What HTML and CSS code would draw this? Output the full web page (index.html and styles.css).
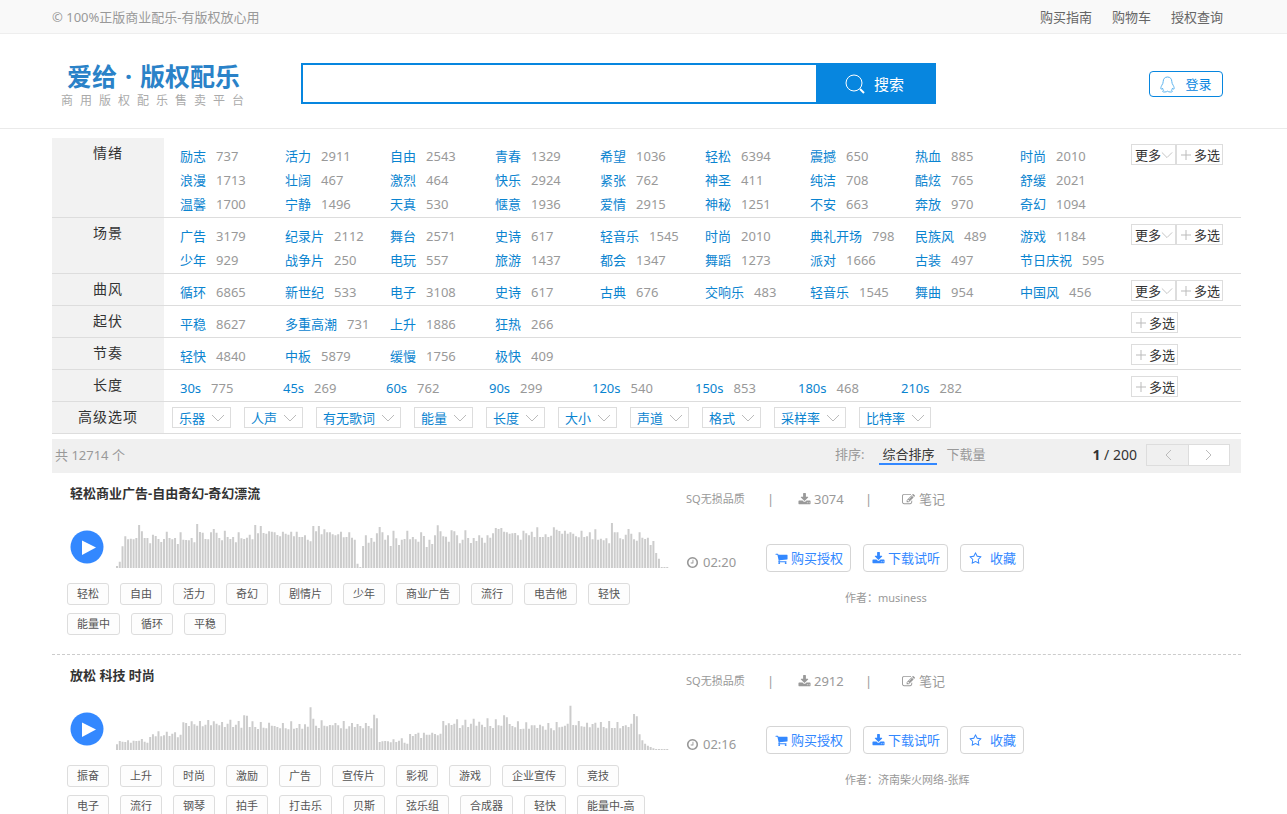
FILE: index.html
```html
<!DOCTYPE html>
<html lang="zh-CN">
<head>
    <title>爱给·版权配乐</title>
    <meta charset="utf-8">
    <meta name="viewport" content="width=device-width, initial-scale=1.0">
    <link rel="stylesheet" href="styles.css">
</head>
<body>

    <!--图标-->
    <svg class="sprite" aria-hidden="true">
        <symbol id="i-cart" viewBox="0 0 1792 1792"><path d="M704 1536q0 52-38 90t-90 38-90-38-38-90 38-90 90-38 90 38 38 90zm896 0q0 52-38 90t-90 38-90-38-38-90 38-90 90-38 90 38 38 90zm128-1088v512q0 24-16.500 42.500t-40.500 21.500l-1044 122q13 60 13 70 0 16-24 64h920q26 0 45 19t19 45-19 45-45 19h-1024q-26 0-45-19t-19-45q0-11 8-31.500t16-36 21.500-40 15.500-29.500l-177-823h-204q-26 0-45-19t-19-45 19-45 45-19h256q16 0 28.500 6.500t19.500 15.500 13 24.500 8 26 5.500 29.500 4.500 26h1201q26 0 45 19t19 45z"/></symbol>
        <symbol id="i-download" viewBox="0 0 1792 1792"><path d="M1344 1344q0-26-19-45t-45-19-45 19-19 45 19 45 45 19 45-19 19-45zm256 0q0-26-19-45t-45-19-45 19-19 45 19 45 45 19 45-19 19-45zm128-224v320q0 40-28 68t-68 28h-1472q-40 0-68-28t-28-68v-320q0-40 28-68t68-28h465l135 136q58 56 136 56t136-56l136-136h464q40 0 68 28t28 68zm-325-569q17 41-14 70l-448 448q-18 19-45 19t-45-19l-448-448q-31-29-14-70 17-39 59-39h256v-448q0-26 19-45t45-19h256q26 0 45 19t19 45v448h256q42 0 59 39z"/></symbol>
        <symbol id="i-clock" viewBox="0 0 1792 1792"><path d="M1024 544v448q0 14-9 23t-23 9h-320q-14 0-23-9t-9-23v-64q0-14 9-23t23-9h224v-352q0-14 9-23t23-9h64q14 0 23 9t9 23zm416 352q0-148-73-273t-198-198-273-73-273 73-198 198-73 273 73 273 198 198 273 73 273-73 198-198 73-273zm224 0q0 209-103 385.500t-279.500 279.500-385.500 103-385.500-103-279.500-279.500-103-385.500 103-385.500 279.500-279.500 385.500-103 385.500 103 279.500 279.500 103 385.500z"/></symbol>
        <symbol id="i-star" viewBox="0 0 1792 1792"><path d="M1201 1004l306-297-422-62-189-382-189 382-422 62 306 297-73 421 378-199 377 199zm527-357q0 22-26 48l-363 354 86 500q1 7 1 20 0 50-41 50-19 0-40-12l-449-236-449 236q-22 12-40 12-21 0-31.500-14.500t-10.500-35.500q0-6 2-20l86-500-364-354q-25-27-25-48 0-37 56-46l502-73 225-455q19-41 49-41t49 41l225 455 502 73q56 9 56 46z"/></symbol>
        <symbol id="i-edit" viewBox="0 0 1792 1792"><path d="M888 1184l116-116-152-152-116 116v56h96v96h56zm440-720q-16-16-33 1l-350 350q-17 17-1 33t33-1l350-350q17-17 1-33zm80 594v190q0 119-84.500 203.500t-203.500 84.500h-832q-119 0-203.500-84.500t-84.500-203.500v-832q0-119 84.500-203.500t203.500-84.500h832q63 0 117 25 15 7 18 23 3 17-9 29l-49 49q-14 14-32 8-23-6-45-6h-832q-66 0-113 47t-47 113v832q0 66 47 113t113 47h832q66 0 113-47t47-113v-126q0-13 9-22l64-64q15-15 35-7t20 29zm-96-738l288 288-672 672h-288v-288zm444 132l-92 92-288-288 92-92q28-28 68-28t68 28l152 152q28 28 28 68t-28 68z"/></symbol>
        <symbol id="i-down" viewBox="0 0 14 14"><path d="M1 4l6 6 6-6" fill="none" stroke="currentColor"/></symbol>
        <symbol id="i-plus" viewBox="0 0 12 12"><path d="M6 1v10M1 6h10" fill="none" stroke="currentColor"/></symbol>
        <symbol id="i-play" viewBox="0 0 34 34"><circle cx="17" cy="17" r="16.500" fill="#38f"/><path d="M12 10.500l14 7-14 7.500z" fill="#fff"/></symbol>
    </svg>

    <div class="topbar">
        <div class="wrap">
            <span>© 100%正版商业配乐-有版权放心用</span>
            <nav>
                <a href="#">购买指南</a>
                <a href="#">购物车</a>
                <a href="#">授权查询</a>
            </nav>
        </div>
    </div>

    <div class="header">
        <div class="wrap">
            <a class="logo" href="#">
                <span class="name">爱给<i>·</i>版权配乐</span>
                <span class="slogan">商用版权配乐售卖平台</span>
            </a>
            <form class="search">
                <input type="text" aria-label="搜索">
                <button type="submit">
                    <svg class="line" width="20" height="20" viewBox="0 0 20 20"><circle cx="9" cy="9" r="8"/><path d="M15 15l4 4" stroke-width="2"/></svg>
                    搜索
                </button>
            </form>
            <button class="login" type="button">
                <svg class="line" width="15" height="17" viewBox="0 0 15 17"><path d="M7.500 1C4.700 1 3.200 3 3.200 5.500c0 1.700-.6 2.400-1.400 3.800-.9 1.600-1.200 3-.8 3.800.4.400 1.100-.4 1.500-1 .1.900.5 1.600 1.100 2.200-.8.300-1.100.8-.9 1.300.5.700 3.700.5 4.800-.4 1.100.9 4.300 1.100 4.800.4.200-.5-.1-1-.9-1.300.6-.6 1-1.300 1.100-2.200.4.600 1.100 1.400 1.500 1 .4-.8.100-2.200-.8-3.800-.8-1.400-1.400-2.100-1.400-3.800C11.800 3 10.300 1 7.500 1z"/></svg>
                登录
            </button>
        </div>
    </div>

    <div class="wrap main">
        <div class="filter">
            <div class="row">
                <h3>情绪</h3>
                <ul>
                    <li><a href="#">励志</a>737</li>
                    <li><a href="#">活力</a>2911</li>
                    <li><a href="#">自由</a>2543</li>
                    <li><a href="#">青春</a>1329</li>
                    <li><a href="#">希望</a>1036</li>
                    <li><a href="#">轻松</a>6394</li>
                    <li><a href="#">震撼</a>650</li>
                    <li><a href="#">热血</a>885</li>
                    <li><a href="#">时尚</a>2010</li>
                    <li><a href="#">浪漫</a>1713</li>
                    <li><a href="#">壮阔</a>467</li>
                    <li><a href="#">激烈</a>464</li>
                    <li><a href="#">快乐</a>2924</li>
                    <li><a href="#">紧张</a>762</li>
                    <li><a href="#">神圣</a>411</li>
                    <li><a href="#">纯洁</a>708</li>
                    <li><a href="#">酷炫</a>765</li>
                    <li><a href="#">舒缓</a>2021</li>
                    <li><a href="#">温馨</a>1700</li>
                    <li><a href="#">宁静</a>1496</li>
                    <li><a href="#">天真</a>530</li>
                    <li><a href="#">惬意</a>1936</li>
                    <li><a href="#">爱情</a>2915</li>
                    <li><a href="#">神秘</a>1251</li>
                    <li><a href="#">不安</a>663</li>
                    <li><a href="#">奔放</a>970</li>
                    <li><a href="#">奇幻</a>1094</li>
                </ul>
                <div class="ops">
                    <button type="button">更多<svg><use href="#i-down"/></svg></button>
                    <button type="button"><svg class="plus"><use href="#i-plus"/></svg>多选</button>
                </div>
            </div>
            <div class="row">
                <h3>场景</h3>
                <ul>
                    <li><a href="#">广告</a>3179</li>
                    <li><a href="#">纪录片</a>2112</li>
                    <li><a href="#">舞台</a>2571</li>
                    <li><a href="#">史诗</a>617</li>
                    <li><a href="#">轻音乐</a>1545</li>
                    <li><a href="#">时尚</a>2010</li>
                    <li><a href="#">典礼开场</a>798</li>
                    <li><a href="#">民族风</a>489</li>
                    <li><a href="#">游戏</a>1184</li>
                    <li><a href="#">少年</a>929</li>
                    <li><a href="#">战争片</a>250</li>
                    <li><a href="#">电玩</a>557</li>
                    <li><a href="#">旅游</a>1437</li>
                    <li><a href="#">都会</a>1347</li>
                    <li><a href="#">舞蹈</a>1273</li>
                    <li><a href="#">派对</a>1666</li>
                    <li><a href="#">古装</a>497</li>
                    <li><a href="#">节日庆祝</a>595</li>
                </ul>
                <div class="ops">
                    <button type="button">更多<svg><use href="#i-down"/></svg></button>
                    <button type="button"><svg class="plus"><use href="#i-plus"/></svg>多选</button>
                </div>
            </div>
            <div class="row">
                <h3>曲风</h3>
                <ul>
                    <li><a href="#">循环</a>6865</li>
                    <li><a href="#">新世纪</a>533</li>
                    <li><a href="#">电子</a>3108</li>
                    <li><a href="#">史诗</a>617</li>
                    <li><a href="#">古典</a>676</li>
                    <li><a href="#">交响乐</a>483</li>
                    <li><a href="#">轻音乐</a>1545</li>
                    <li><a href="#">舞曲</a>954</li>
                    <li><a href="#">中国风</a>456</li>
                </ul>
                <div class="ops">
                    <button type="button">更多<svg><use href="#i-down"/></svg></button>
                    <button type="button"><svg class="plus"><use href="#i-plus"/></svg>多选</button>
                </div>
            </div>
            <div class="row">
                <h3>起伏</h3>
                <ul>
                    <li><a href="#">平稳</a>8627</li>
                    <li><a href="#">多重高潮</a>731</li>
                    <li><a href="#">上升</a>1886</li>
                    <li><a href="#">狂热</a>266</li>
                </ul>
                <div class="ops">
                    <button type="button"><svg class="plus"><use href="#i-plus"/></svg>多选</button>
                </div>
            </div>
            <div class="row">
                <h3>节奏</h3>
                <ul>
                    <li><a href="#">轻快</a>4840</li>
                    <li><a href="#">中板</a>5879</li>
                    <li><a href="#">缓慢</a>1756</li>
                    <li><a href="#">极快</a>409</li>
                </ul>
                <div class="ops">
                    <button type="button"><svg class="plus"><use href="#i-plus"/></svg>多选</button>
                </div>
            </div>
            <div class="row">
                <h3>长度</h3>
                <ul class="length">
                    <li><a href="#">30s</a>775</li>
                    <li><a href="#">45s</a>269</li>
                    <li><a href="#">60s</a>762</li>
                    <li><a href="#">90s</a>299</li>
                    <li><a href="#">120s</a>540</li>
                    <li><a href="#">150s</a>853</li>
                    <li><a href="#">180s</a>468</li>
                    <li><a href="#">210s</a>282</li>
                </ul>
                <div class="ops">
                    <button type="button"><svg class="plus"><use href="#i-plus"/></svg>多选</button>
                </div>
            </div>
            <div class="row">
                <h3>高级选项</h3>
                <div class="adv">
                    <select aria-label="乐器"><option>乐器</option></select>
                    <select aria-label="人声"><option>人声</option></select>
                    <select aria-label="有无歌词"><option>有无歌词</option></select>
                    <select aria-label="能量"><option>能量</option></select>
                    <select aria-label="长度"><option>长度</option></select>
                    <select aria-label="大小"><option>大小</option></select>
                    <select aria-label="声道"><option>声道</option></select>
                    <select aria-label="格式"><option>格式</option></select>
                    <select aria-label="采样率"><option>采样率</option></select>
                    <select aria-label="比特率"><option>比特率</option></select>
                </div>
            </div>
        </div>

        <div class="listbar">
            <span class="total">共 12714 个</span>
            <div class="sort">
                <span>排序:</span>
                <a class="on" href="#">综合排序</a>
                <a href="#">下载量</a>
            </div>
            <div class="pager">
                <span><b>1</b> / 200</span>
                <button type="button" aria-label="上一页" disabled><svg viewBox="0 0 8 12"><path d="M7 1L2 6l5 5"/></svg></button>
                <button type="button" aria-label="下一页"><svg viewBox="0 0 8 12"><path d="M1 1l5 5-5 5"/></svg></button>
            </div>
        </div>

        <div class="track">
            <div class="sound">
                <h2>轻松商业广告-自由奇幻-奇幻漂流</h2>
                <div class="player">
                    <button type="button" aria-label="播放"><svg><use href="#i-play"/></svg></button>
                    <svg class="wave" id="wave1" viewBox="0 0 1660 138" preserveAspectRatio="none"></svg>
                </div>
                <div class="tags">
                    <a href="#">轻松</a>
                    <a href="#">自由</a>
                    <a href="#">活力</a>
                    <a href="#">奇幻</a>
                    <a href="#">剧情片</a>
                    <a href="#">少年</a>
                    <a href="#">商业广告</a>
                    <a href="#">流行</a>
                    <a href="#">电吉他</a>
                    <a href="#">轻快</a>
                    <a href="#">能量中</a>
                    <a href="#">循环</a>
                    <a href="#">平稳</a>
                </div>
            </div>
            <div class="info">
                <div class="meta">
                    <small>SQ无损品质</small>
                    <i>|</i>
                    <span><svg><use href="#i-download"/></svg>3074</span>
                    <i>|</i>
                    <a href="#"><svg><use href="#i-edit"/></svg>笔记</a>
                </div>
                <div class="buy">
                    <span class="time"><svg><use href="#i-clock"/></svg>02:20</span>
                    <button type="button"><svg><use href="#i-cart"/></svg>购买授权</button>
                    <button type="button"><svg><use href="#i-download"/></svg>下载试听</button>
                    <button class="fav" type="button"><svg><use href="#i-star"/></svg>收藏</button>
                </div>
                <p class="author">作者：musiness</p>
            </div>
        </div>

        <div class="track">
            <div class="sound">
                <h2>放松 科技 时尚</h2>
                <div class="player">
                    <button type="button" aria-label="播放"><svg><use href="#i-play"/></svg></button>
                    <svg class="wave" id="wave2" viewBox="0 0 1660 138" preserveAspectRatio="none"></svg>
                </div>
                <div class="tags">
                    <a href="#">振奋</a>
                    <a href="#">上升</a>
                    <a href="#">时尚</a>
                    <a href="#">激励</a>
                    <a href="#">广告</a>
                    <a href="#">宣传片</a>
                    <a href="#">影视</a>
                    <a href="#">游戏</a>
                    <a href="#">企业宣传</a>
                    <a href="#">竞技</a>
                    <a href="#">电子</a>
                    <a href="#">流行</a>
                    <a href="#">钢琴</a>
                    <a href="#">拍手</a>
                    <a href="#">打击乐</a>
                    <a href="#">贝斯</a>
                    <a href="#">弦乐组</a>
                    <a href="#">合成器</a>
                    <a href="#">轻快</a>
                    <a href="#">能量中-高</a>
                </div>
            </div>
            <div class="info">
                <div class="meta">
                    <small>SQ无损品质</small>
                    <i>|</i>
                    <span><svg><use href="#i-download"/></svg>2912</span>
                    <i>|</i>
                    <a href="#"><svg><use href="#i-edit"/></svg>笔记</a>
                </div>
                <div class="buy">
                    <span class="time"><svg><use href="#i-clock"/></svg>02:16</span>
                    <button type="button"><svg><use href="#i-cart"/></svg>购买授权</button>
                    <button type="button"><svg><use href="#i-download"/></svg>下载试听</button>
                    <button class="fav" type="button"><svg><use href="#i-star"/></svg>收藏</button>
                </div>
                <p class="author">作者：济南柴火网络-张辉</p>
            </div>
        </div>
    </div>

    <script src="wave.js"></script>
</body>
</html>
```
FILE: styles.css
```css
* {
    box-sizing: border-box;
}

body {
    margin: 0;
    background: #fff;
    color: #999;
    font: 13px/18px "Noto Sans", "Noto Sans CJK SC", sans-serif;
}

a {
    color: inherit;
    text-decoration: none;
}

h2, h3, p, ul {
    margin: 0;
    padding: 0;
    list-style: none;
}

i {
    font-style: normal;
}

button, input, select {
    margin: 0;
    padding: 0;
    font: inherit;
    color: inherit;
    border: 0;
    border-radius: 0;
    background: none;
}

button {
    cursor: pointer;
}

svg {
    fill: currentColor;
    flex: none;
}

.line {
    fill: none;
    stroke: currentColor;
}

.sprite {
    display: none;
}

.wrap {
    margin: 0 46px 0 52px;
}

/*顶部*/
.topbar {
    background: #f9f9f9;
    border-bottom: 1px solid #eee;
}

.topbar .wrap {
    display: flex;
    justify-content: space-between;
    padding: 8px 18px 7px 0;
}

.topbar nav {
    display: flex;
    gap: 20px;
    color: #666;
}

.header {
    border-bottom: 1px solid #eaeaea;
}

.header .wrap {
    display: flex;
    align-items: flex-start;
    padding: 29px 18px 19px 0;
}

.logo {
    width: 249px;
    padding-left: 9px;
}

.logo span {
    display: block;
}

.logo .name {
    padding-left: 6px;
    color: #2a82c8;
    font-size: 25px;
    font-weight: bold;
    line-height: 26px;
}

.logo i {
    padding: 0 8px;
}

.logo .slogan {
    font-size: 12px;
    line-height: 17px;
    letter-spacing: 7px;
    margin-top: 3px;
    color: #aaa;
    white-space: nowrap;
}

.search {
    display: flex;
    flex: 0 1 635px;
    height: 41px;
}

.search input {
    flex: 1;
    min-width: 0;
    padding: 0 10px;
    border: 2px solid #0786df;
    border-right: 0;
    color: #333;
}

.search button {
    display: flex;
    align-items: center;
    justify-content: center;
    gap: 9px;
    width: 120px;
    padding-right: 3px;
    background: #0786df;
    color: #fff;
    font-size: 15px;
}

.login {
    display: flex;
    align-items: center;
    justify-content: center;
    gap: 10px;
    width: 74px;
    height: 26px;
    margin: 8px 0 0 auto;
    border: 1px solid #0786df;
    border-radius: 4px;
    color: #0786df;
}

.login svg {
    color: #5cb3ee;
}

/*筛选*/
.main {
    padding-top: 9px;
}

.row {
    display: flex;
    border-bottom: 1px solid #ddd;
}

.row h3 {
    width: 112px;
    padding-top: 6px;
    background: #f2f2f2;
    color: #333;
    font-size: 14px;
    font-weight: normal;
    letter-spacing: 1px;
    text-align: center;
}

.row ul {
    flex: 1;
    display: grid;
    grid-template-columns: repeat(9, minmax(0, 105px));
    padding: 6px 0 1px 16px;
    line-height: 24px;
    white-space: nowrap;
}

.row .length {
    grid-template-columns: repeat(9, minmax(0, 103px));
}

.row ul a {
    margin-right: 10px;
    color: #0a84d0;
}

.ops {
    display: flex;
    align-items: flex-start;
    width: 110px;
    padding-top: 6px;
}

.ops button {
    display: flex;
    align-items: center;
    height: 21px;
    padding: 0 2px 0 3px;
    border: 1px solid #ddd;
    color: #333;
}

.ops svg {
    width: 12px;
    height: 12px;
    color: #bbb;
}

.ops .plus {
    margin-right: 2px;
}

.adv {
    display: flex;
    flex-wrap: wrap;
    gap: 13px;
    padding: 5px 8px;
}

.adv select {
    height: 21px;
    padding: 0 24px 0 6px;
    border: 1px solid #ddd;
    color: #0a84d0;
    appearance: none;
    background: url("data:image/svg+xml,%3Csvg xmlns='http://www.w3.org/2000/svg' width='14' height='8' fill='none' stroke='%23bbb'%3E%3Cpath d='M1 1l6 6 6-6'/%3E%3C/svg%3E") no-repeat right 5px center;
}

/*列表头*/
.listbar {
    display: flex;
    align-items: center;
    height: 34px;
    margin-top: 5px;
    padding: 0 11px 2px 3px;
    background: #f0f0f0;
}

.sort {
    display: flex;
    gap: 10px;
    margin-left: auto;
}

.sort span {
    margin-right: 5px;
}

.sort .on {
    margin: 0 -1px 0 0;
    padding: 0 3px;
    border-bottom: 2px solid #38f;
    color: #333;
}

.pager {
    display: flex;
    align-items: center;
    margin-left: 107px;
    color: #333;
    font-size: 14px;
}

.pager span {
    margin-right: 9px;
}

.pager button {
    width: 42px;
    height: 22px;
    border: 1px solid #ddd;
    background: #fff;
}

.pager button:disabled {
    border-right: 0;
    background: #f0f0f0;
}

.pager svg {
    display: block;
    width: 8px;
    height: 12px;
    margin: 0 auto;
    fill: none;
    stroke: #bbb;
}

/*音乐*/
.track {
    display: flex;
    gap: 17px;
    padding: 11px 0 19px;
    border-bottom: 1px dashed #ccc;
}

.sound {
    flex: 0 1 617px;
    min-width: 0;
}

.sound h2 {
    padding-left: 18px;
    color: #333;
    font-size: 13px;
    line-height: 18px;
}

.player {
    display: flex;
    align-items: flex-end;
    gap: 12px;
    margin-top: 20px;
    padding-left: 18px;
}

.player button {
    margin-bottom: 4px;
}

.player button svg {
    display: block;
    width: 34px;
    height: 34px;
}

.wave {
    flex: 1;
    min-width: 0;
    height: 46px;
    color: #ccc;
}

.tags {
    display: flex;
    flex-wrap: wrap;
    gap: 8px 11px;
    margin-top: 15px;
    padding-left: 15px;
}

.tags a {
    padding: 0 9px;
    border: 1px solid #ddd;
    border-radius: 3px;
    background: #fdfdfd;
    color: #555;
    font-size: 11px;
    line-height: 20px;
}

.info svg {
    width: 13px;
    height: 13px;
    margin-right: 3px;
}

.meta {
    display: flex;
    align-items: center;
    padding-top: 6px;
}

.meta small {
    width: 81px;
    font-size: 11px;
}

.meta i {
    width: 31px;
}

.meta span {
    width: 67px;
}

.meta i + a {
    margin-left: 6px;
}

.meta a svg, .time svg {
    margin-right: 4px;
}

.meta span, .meta a, .time {
    display: flex;
    align-items: center;
}

.buy {
    display: flex;
    gap: 12px;
    margin-top: 36px;
}

.time {
    width: 68px;
    padding-top: 8px;
}

.buy button {
    display: flex;
    align-items: center;
    height: 28px;
    padding: 0 7px 0 8px;
    border: 1px solid #d5d5d5;
    border-radius: 4px;
    color: #38f;
}

.buy .fav svg {
    margin-right: 8px;
}

.author {
    margin-top: 17px;
    padding-left: 159px;
    font-size: 11px;
}
```
FILE: wave.js
```js
// 每个数字是一根柱子的顶部位置, base 是底线
var waves = {
    wave1: {
        base: 277,
        tops: [271,258,212,182,191,189,191,187,148,167,187,187,203,177,181,190,199,190,168,187,
            191,187,205,170,192,193,194,187,200,145,169,171,190,191,170,160,171,187,194,165,
            184,190,184,200,170,188,190,186,177,191,148,173,151,172,174,167,168,170,178,182,
            168,174,177,168,182,168,184,184,179,192,197,151,167,151,176,161,170,170,176,179,
            176,168,185,184,170,186,192,264,274,211,179,201,187,198,173,154,170,192,179,211,
            165,188,208,192,190,165,191,184,191,198,170,181,214,192,205,179,149,167,182,183,
            198,164,167,179,203,192,164,187,202,187,196,179,186,201,179,186,173,157,160,157,
            168,170,174,173,172,179,192,165,173,179,168,184,155,184,184,176,184,180,155,162,
            166,174,165,174,170,174,182,185,165,184,182,170,191,161,192,189,194,188,203,142,
            170,170,188,191,177,160,174,191,195,170,186,190,186,208,196,232,249,274,274,274]
    },
    wave2: {
        base: 312,
        tops: [295,285,287,288,283,290,284,285,284,279,287,290,273,265,271,256,271,268,257,270,
            263,259,274,266,229,231,240,226,235,239,225,241,236,222,238,226,233,238,228,243,
            233,221,243,236,225,245,208,209,243,226,243,249,228,245,247,230,239,240,243,247,
            231,247,250,226,248,246,234,248,235,242,184,218,239,246,223,239,241,237,238,231,
            238,247,225,248,241,231,243,234,240,247,231,240,247,206,217,288,286,285,286,289,
            280,288,284,277,290,293,264,270,264,260,276,260,266,266,260,264,268,263,225,238,
            232,237,233,220,246,238,221,243,233,218,239,227,236,243,217,240,246,220,238,239,
            208,214,234,240,244,226,249,248,229,248,238,238,246,236,241,251,231,247,253,228,
            244,242,239,233,179,237,238,225,241,242,230,244,234,230,245,228,243,247,225,246,
            246,228,247,240,238,243,233,204,211,265,283,293,299,303,307,309,309,309,309,309]
    }
};

for (var id in waves) {
    var d = "";
    var wave = waves[id];
    for (var i = 0; i < wave.tops.length; i++) {
        var h = wave.base - wave.tops[i];
        d += "M" + (i * 8.3).toFixed(1) + " 138v-" + h + "h6v" + h + "z";
    }
    var path = document.createElementNS("http://www.w3.org/2000/svg", "path");
    path.setAttribute("d", d);
    document.getElementById(id).appendChild(path);
}
```
